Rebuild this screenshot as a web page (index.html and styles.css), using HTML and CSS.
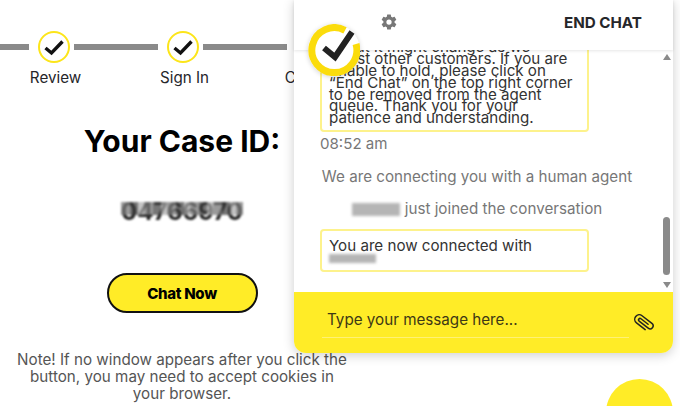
FILE: index.html
```html
<!DOCTYPE html>
<html lang="en">
<head>
    <meta charset="UTF-8">
    <title>Your Case ID</title>
    <link rel="stylesheet" href="styles.css">
</head>
<body>
<div class="wall">
    <div class="main">
        <div class="steps">
            <div class="step">
                <div class="step-top">
                    <span class="bar"></span>
                    <span class="dot"><svg width="22" height="18" viewBox="0 0 22 18"><path d="M2.500 10l6 5L19.500 3.500" fill="none" stroke="#111" stroke-width="3.400"/></svg></span>
                    <span class="bar"></span>
                </div>
                <div class="step-name">Review</div>
            </div>
            <div class="step">
                <div class="step-top">
                    <span class="bar"></span>
                    <span class="dot"><svg width="22" height="18" viewBox="0 0 22 18"><path d="M2.500 10l6 5L19.500 3.500" fill="none" stroke="#111" stroke-width="3.400"/></svg></span>
                    <span class="bar"></span>
                </div>
                <div class="step-name">Sign In</div>
            </div>
            <div class="step">
                <div class="step-top">
                    <span class="bar"></span>
                    <span class="dot"></span>
                    <span class="bar"></span>
                </div>
                <div class="step-name">Confirm</div>
            </div>
        </div>
        <h1 class="case-title">Your Case ID:</h1>
        <div class="case-id">04766970</div>
        <button class="chat-now">Chat Now</button>
        <p class="note">Note! If no window appears after you click the button, you may need to accept cookies in your browser.</p>
    </div>

    <div class="launcher"></div>

    <div class="chat">
        <div class="chat-head">
            <svg class="gear" width="18" height="18" viewBox="0 0 24 24"><path fill="#777" d="M19.4 13c.04-.33.06-.66.06-1s-.02-.67-.07-1l2.1-1.65c.2-.15.25-.42.13-.64l-2-3.46c-.12-.22-.39-.3-.61-.22l-2.49 1c-.52-.4-1.08-.72-1.69-.98l-.38-2.65A.49.49 0 0 0 14 2h-4c-.25 0-.46.18-.49.42l-.38 2.65c-.61.26-1.17.59-1.69.98l-2.49-1a.5.5 0 0 0-.61.22l-2 3.46c-.13.22-.07.49.12.64L4.57 11c-.05.33-.07.66-.07 1s.02.67.07 1l-2.11 1.65c-.19.15-.25.42-.12.64l2 3.46c.12.22.39.3.61.22l2.49-1c.52.4 1.08.72 1.69.98l.38 2.65c.03.24.24.42.49.42h4c.25 0 .46-.18.49-.42l.38-2.65c.61-.26 1.17-.59 1.69-.98l2.49 1c.23.09.49 0 .61-.22l2-3.46c.12-.22.07-.49-.12-.64L19.4 13zM12 15.5a3.5 3.5 0 1 1 0-7 3.5 3.5 0 0 1 0 7z"/></svg>
            <span class="end-chat">END CHAT</span>
        </div>
        <div class="chat-logo">
            <svg width="52" height="52" viewBox="0 0 52 52">
                <path d="M48 20A22.500 22.500 0 1 1 37 6.300" fill="none" stroke="#fbdc0c" stroke-width="7"/>
                <path d="M16 24l11 9L44 8" fill="none" stroke="#222" stroke-width="6"/>
            </svg>
        </div>
        <div class="chat-body">
            <div class="bubble bubble-long">
                about it might change as we<br>
                assist other customers. If you are<br>
                unable to hold, please click on<br>
                “End Chat” on the top right corner<br>
                to be removed from the agent<br>
                queue. Thank you for your<br>
                patience and understanding.
            </div>
            <div class="msg-time">08:52 am</div>
            <div class="status">We are connecting you with a human agent</div>
            <div class="status status-joined"><span class="fuzz fuzz-name"></span>just joined the conversation</div>
            <div class="bubble bubble-short">
                You are now connected with
                <span class="fuzz fuzz-agent"></span>
            </div>
            <div class="scroll">
                <span class="arrow-up"></span>
                <span class="thumb"></span>
                <span class="arrow-down"></span>
            </div>
        </div>
        <div class="chat-foot">
            <div class="type-box">Type your message here...</div>
            <svg class="clip" width="22" height="22" viewBox="0 0 22 22"><path transform="translate(11 11) rotate(38)" d="M5 4.500H-6A4.500 4.500 0 0 1-6-4.500H6.500A3 3 0 0 1 6.500 1.500H-5A1.500 1.500 0 0 1-5-1.500H4" fill="none" stroke="#222" stroke-width="1.500" stroke-linecap="round"/></svg>
        </div>
    </div>
</div>
</body>
</html>
```

FILE: styles.css
```css
html, body, .wall {
    width: 100%;
    height: 100%;
    margin: 0;
    border: 0;
    padding: 0;
}

body {
    font-family: Inter, "Liberation Sans", sans-serif;
    background-color: #fff;
    overflow: hidden;
}

.wall {
    position: relative;
    overflow: hidden;
}

.main {
    width: 364px;
    display: flex;
    flex-direction: column;
    align-items: center;
}

.steps {
    display: flex;
    align-self: flex-start;
    margin: 31px 0 0 -13px;
}

.step {
    width: 129px;
    display: flex;
    flex-direction: column;
    align-items: center;
}

.step-top {
    width: 129px;
    height: 32px;
    display: flex;
    align-items: center;
    justify-content: center;
    gap: 4px;
}

.bar {
    flex: 1;
    height: 6px;
    background-color: #8a8a8a;
    margin: 0 5px 0 0;
}

.step-top .bar:last-child {
    margin: 0;
}

.dot {
    width: 28px;
    height: 28px;
    border: 2px solid #fce51a;
    border-radius: 50%;
    display: flex;
    align-items: center;
    justify-content: center;
    flex-shrink: 0;
}

.step-name {
    margin: 6px 0 0 8px;
    font-size: 15.2px;
    line-height: 18px;
    color: #26262a;
}

.case-title {
    margin: 36px 0 0;
    font-size: 30px;
    line-height: 36px;
    font-weight: 700;
    color: #000;
}

.case-id {
    position: relative;
    margin-top: 39px;
    font-size: 24px;
    line-height: 28px;
    font-weight: 700;
    color: #222;
    filter: blur(1.1px);
}

/* mosaic over the blurred number */
.case-id::after {
    content: "";
    position: absolute;
    left: 0;
    right: 0;
    top: 4px;
    height: 13px;
    background: repeating-linear-gradient(90deg, rgba(120, 120, 120, 0.75) 0 9px, rgba(60, 60, 60, 0.7) 9px 17px, rgba(170, 170, 170, 0.7) 17px 23px);
}

.chat-now {
    margin-top: 47px;
    width: 151px;
    height: 40px;
    border: 2px solid #111;
    border-radius: 20px;
    background-color: #ffec27;
    font-family: inherit;
    font-size: 15px;
    font-weight: 800;
    color: #000;
    letter-spacing: -0.3px;
}

.note {
    margin: 38px 0 0;
    width: 336px;
    font-size: 15.2px;
    line-height: 17px;
    text-align: center;
    color: #555;
}

.launcher {
    position: absolute;
    left: 606px;
    top: 379px;
    width: 67px;
    height: 67px;
    border-radius: 50%;
    background-color: #ffec27;
}

.chat {
    position: absolute;
    left: 294px;
    top: 0;
    width: 379px;
    height: 353px;
    display: flex;
    flex-direction: column;
    background-color: #fff;
    border-radius: 0 0 12px 12px;
    box-shadow: 0 2px 12px rgba(0, 0, 0, 0.2);
}

.chat-head {
    height: 50px;
    flex-shrink: 0;
    display: flex;
    align-items: center;
    justify-content: space-between;
    padding: 0 31px 6px 86px;
    box-sizing: border-box;
    box-shadow: 0 1px 3px rgba(0, 0, 0, 0.1);
    position: relative;
    z-index: 1;
    background-color: #fff;
}

.end-chat {
    font-size: 15.2px;
    font-weight: 700;
    color: #26262a;
}

.chat-logo {
    position: absolute;
    left: 14px;
    top: 24px;
    width: 52px;
    height: 52px;
    border-radius: 50%;
    background-color: #fff;
    box-shadow: 0 1px 5px rgba(0, 0, 0, 0.18);
    z-index: 2;
}

.chat-body {
    flex: 1;
    min-height: 0;
    position: relative;
    overflow: hidden;
    display: flex;
    flex-direction: column;
    justify-content: flex-end;
    padding: 0 0 20px 26px;
}

.bubble {
    width: 269px;
    box-sizing: border-box;
    border: 2px solid #fdf28c;
    border-radius: 4px;
    padding: 9px 0 6px 7px;
    font-size: 15.15px;
    line-height: 11.8px;
    color: #333;
    flex-shrink: 0;
    white-space: nowrap;
}

.msg-time {
    margin-top: 3px;
    font-size: 15.1px;
    line-height: 18px;
    color: #777;
}

.status {
    width: 314px;
    margin: 15px 0 0;
    font-size: 15.2px;
    line-height: 18px;
    text-align: center;
    color: #777;
    white-space: nowrap;
}

.status-joined {
    display: flex;
    justify-content: center;
    margin-top: 14px;
}

.fuzz {
    display: inline-block;
    background-color: #b5b5b5;
    filter: blur(1.5px);
}

.fuzz-name {
    width: 48px;
    height: 13px;
    margin: 3px 5px 0 0;
}

.fuzz-agent {
    display: block;
    width: 47px;
    height: 9px;
    margin-top: 2px;
}

.bubble-short {
    margin-top: 11px;
    height: 43px;
    padding: 8px 0 0 7px;
    line-height: 13px;
}

.scroll {
    position: absolute;
    right: 0;
    top: 0;
    bottom: 0;
    width: 10px;
}

.arrow-up, .arrow-down {
    position: absolute;
    left: 0;
    border-left: 4px solid transparent;
    border-right: 4px solid transparent;
}

.arrow-up {
    top: 4px;
    border-bottom: 6px solid #8a8a8a;
}

.arrow-down {
    bottom: 4px;
    border-top: 6px solid #8a8a8a;
}

.thumb {
    position: absolute;
    left: 0;
    top: 167px;
    width: 7px;
    height: 58px;
    border-radius: 4px;
    background-color: #8a8a8a;
}

.chat-foot {
    height: 61px;
    flex-shrink: 0;
    box-sizing: border-box;
    display: flex;
    align-items: flex-start;
    padding: 16px 0 0 28px;
    background-color: #ffec27;
    border-radius: 0 0 12px 12px;
}

.type-box {
    width: 307px;
    height: 30px;
    box-sizing: border-box;
    padding: 2px 0 0 5px;
    font-size: 15.2px;
    line-height: 20px;
    color: #3d3815;
    border-bottom: 1px solid #fff176;
}

.clip {
    margin: 4px 0 0 4px;
}
```
